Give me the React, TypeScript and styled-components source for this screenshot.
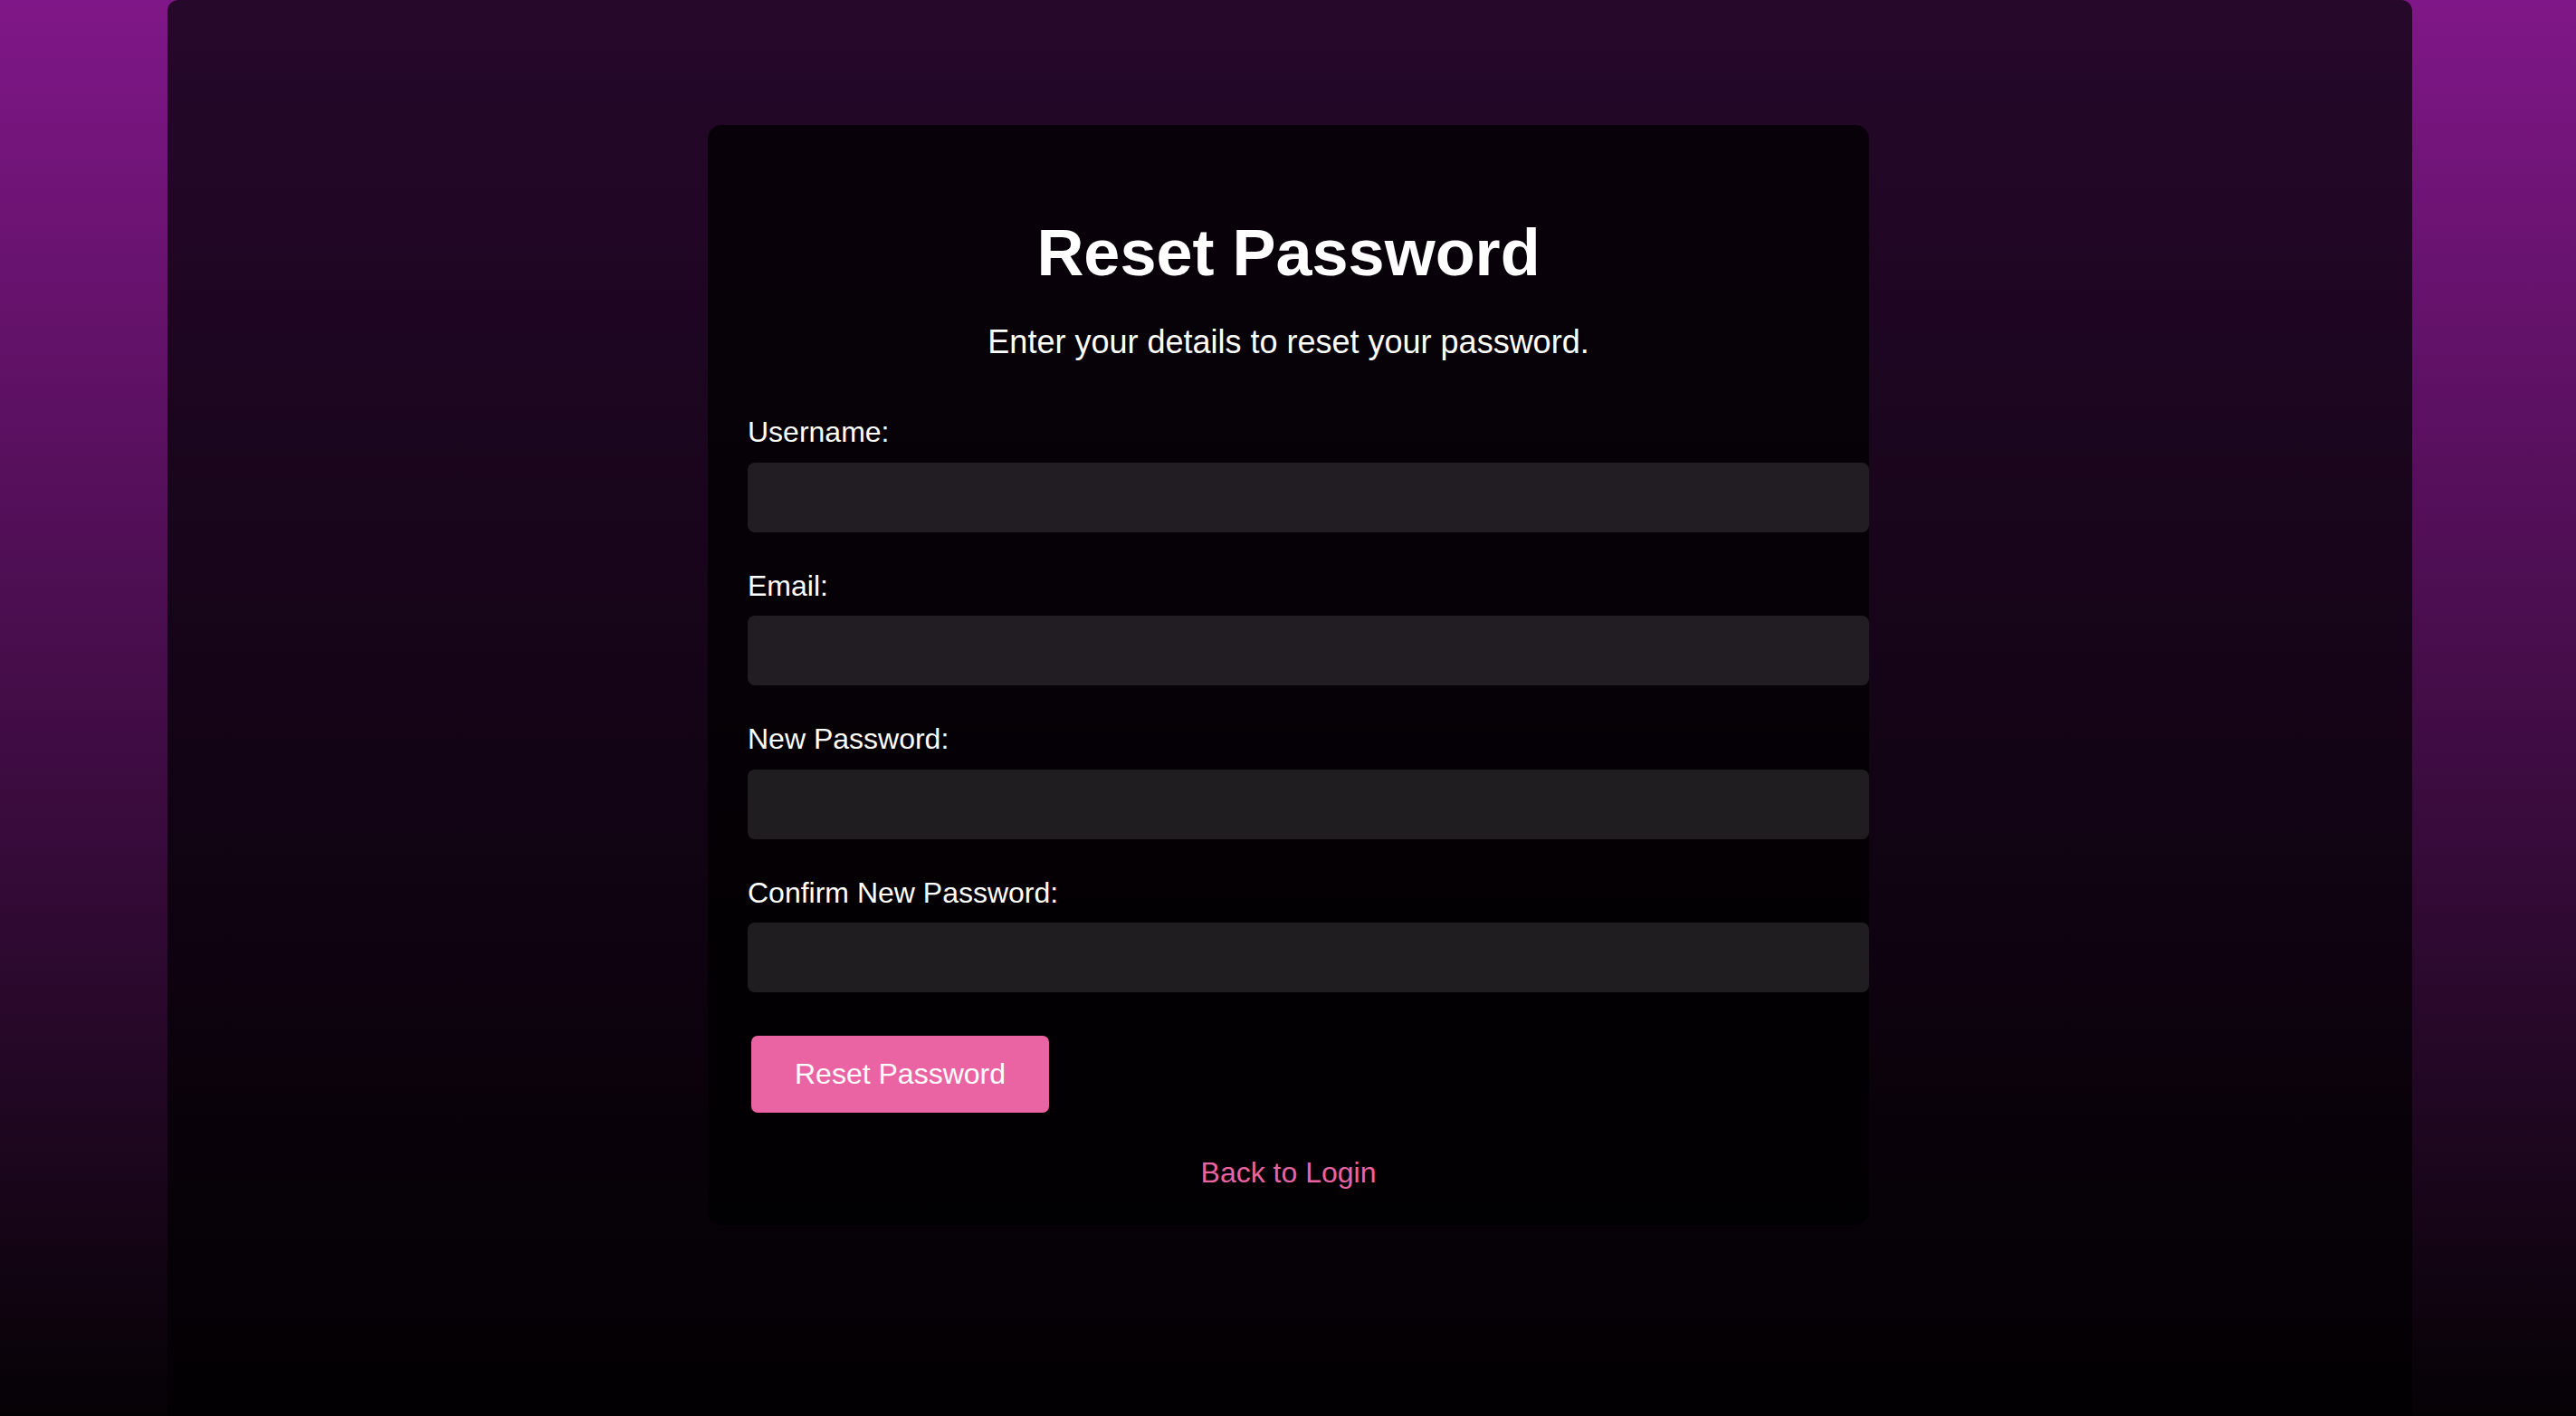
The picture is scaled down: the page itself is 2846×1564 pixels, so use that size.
import React from "react";
import styled, { createGlobalStyle } from "styled-components";

const GlobalStyle = createGlobalStyle`
  html, body {
    margin: 0;
    padding: 0;
    height: 100%;
  }
  body {
    font-family: "Liberation Sans", Arial, sans-serif;
    background: linear-gradient(to bottom, #801788 0%, #050205 100%);
    background-attachment: fixed;
    min-height: 1564px;
    overflow: hidden;
  }
  #root {
    min-height: 1564px;
  }
`;

const Page = styled.div`
  display: flex;
  justify-content: flex-start;
  min-height: 1564px;
  padding: 0 181px 0 185px;
  box-sizing: border-box;
`;

const Frame = styled.main`
  flex: 1;
  min-height: 1564px;
  border-radius: 12px 12px 0 0;
  background: linear-gradient(to bottom, #26082b 0%, #020002 100%);
  display: flex;
  flex-direction: column;
  align-items: center;
  padding: 138px 3px 0 0;
  box-sizing: border-box;
`;

const Card = styled.section`
  width: 1283px;
  box-sizing: border-box;
  padding: 44px 44px 39.5px 44px;
  border-radius: 15px;
  background: rgba(0, 0, 0, 0.74);
  color: #ffffff;
  display: flex;
  flex-direction: column;
`;

const Title = styled.h2`
  margin: 57px 0 0;
  font-size: 72px;
  line-height: 80px;
  font-weight: 700;
  text-align: center;
  color: #ffffff;
`;

const Subtitle = styled.p`
  margin: 38px 0 0;
  font-size: 36px;
  line-height: 42px;
  text-align: center;
  color: #ffffff;
`;

const Form = styled.form`
  display: flex;
  flex-direction: column;
  align-items: flex-start;
  margin-top: 60px;
`;

const Field = styled.div<{ $first?: boolean }>`
  display: flex;
  flex-direction: column;
  align-self: stretch;
  margin-top: ${(p) => (p.$first ? "0" : "41px")};
`;

const Label = styled.label`
  display: block;
  font-size: 32px;
  line-height: 37px;
  color: #ffffff;
  margin-bottom: 14.5px;
`;

const Input = styled.input`
  display: block;
  width: 100%;
  height: 77px;
  padding: 0 22px;
  box-sizing: content-box;
  border: none;
  outline: none;
  border-radius: 8px;
  background: rgba(255, 255, 255, 0.115);
  color: #ffffff;
  font-family: "Liberation Sans", Arial, sans-serif;
  font-size: 32px;
`;

const Button = styled.button`
  margin: 48px 0 0 4px;
  width: 329px;
  height: 85px;
  border: none;
  border-radius: 7px;
  background: #ea64a3;
  color: #ffffff;
  font-family: "Liberation Sans", Arial, sans-serif;
  font-size: 32px;
  line-height: 37px;
  display: flex;
  align-items: center;
  justify-content: center;
  cursor: pointer;
`;

const Footer = styled.p`
  margin: 47.5px 0 0;
  text-align: center;
  font-size: 32px;
  line-height: 37px;
`;

const BackLink = styled.a`
  color: #ea64a3;
  text-decoration: none;
`;

const fields = [
  { id: "username", label: "Username:", type: "text" },
  { id: "email", label: "Email:", type: "email" },
  { id: "newPassword", label: "New Password:", type: "password" },
  { id: "confirmPassword", label: "Confirm New Password:", type: "password" },
];

export default function App() {
  return (
    <>
      <GlobalStyle />
      <Page>
        <Frame>
          <Card>
            <Title>Reset Password</Title>
            <Subtitle>Enter your details to reset your password.</Subtitle>
            <Form onSubmit={(e) => e.preventDefault()}>
              {fields.map((f, i) => (
                <Field key={f.id} $first={i === 0}>
                  <Label htmlFor={f.id}>{f.label}</Label>
                  <Input id={f.id} type={f.type} />
                </Field>
              ))}
              <Button type="submit">Reset Password</Button>
            </Form>
            <Footer>
              <BackLink href="#">Back to Login</BackLink>
            </Footer>
          </Card>
        </Frame>
      </Page>
    </>
  );
}
